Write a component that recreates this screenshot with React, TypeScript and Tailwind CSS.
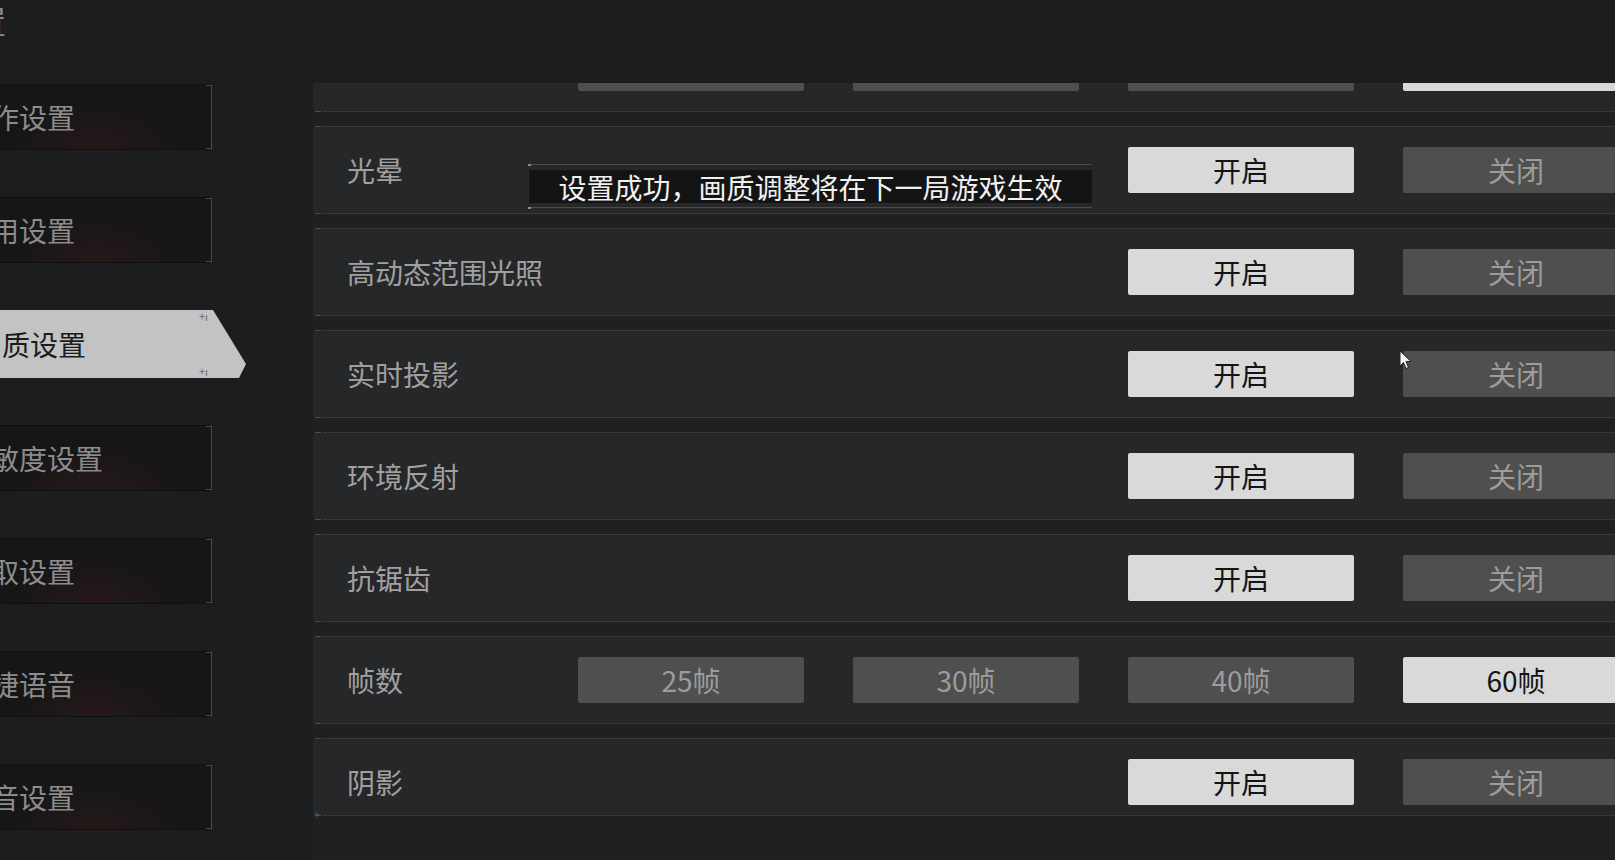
import React from "react";

type Row = {
  label: string;
  options: string[];
  active: number;
  startCol: number;
  last?: boolean;
  toast?: boolean;
};

const rows: Row[] = [
  { label: "画面", options: ["25帧", "30帧", "40帧", "60帧"], active: 3, startCol: 1 },
  { label: "光晕", options: ["开启", "关闭"], active: 0, startCol: 3, toast: true },
  { label: "高动态范围光照", options: ["开启", "关闭"], active: 0, startCol: 3 },
  { label: "实时投影", options: ["开启", "关闭"], active: 0, startCol: 3 },
  { label: "环境反射", options: ["开启", "关闭"], active: 0, startCol: 3 },
  { label: "抗锯齿", options: ["开启", "关闭"], active: 0, startCol: 3 },
  { label: "帧数", options: ["25帧", "30帧", "40帧", "60帧"], active: 3, startCol: 1 },
  { label: "阴影", options: ["开启", "关闭"], active: 0, startCol: 3, last: true },
];

const sideItems = [
  { text: "操作设置", selected: false },
  { text: "通用设置", selected: false },
  { text: "画质设置", selected: true },
  { text: "灵敏度设置", selected: false },
  { text: "拾取设置", selected: false },
  { text: "快捷语音", selected: false },
  { text: "声音设置", selected: false },
];

function SideItem({ text, selected }: { text: string; selected: boolean }) {
  if (selected) {
    return (
      <div className="relative h-[68px] w-[246px] shrink-0">
        <div className="flex h-full w-full items-center bg-[#c3c3c3] [clip-path:polygon(0_0,213px_0,246px_54px,239px_100%,0_100%)]">
          <span className="ml-[-26px] whitespace-nowrap text-[28px] leading-none text-[#1c1c1c]">{text}</span>
        </div>
        <span className="absolute left-[199px] top-[1px] text-[11px] leading-none text-[#6a6a6a]">+ı</span>
        <span className="absolute left-[199px] bottom-[1px] text-[11px] leading-none text-[#6a6a6a]">+ı</span>
      </div>
    );
  }
  return (
    <div className="relative flex h-[66px] w-[212px] shrink-0 items-center overflow-hidden border-y border-[#101011] border-r border-r-[#4a4a4c] bg-[#161617] bg-[radial-gradient(ellipse_at_45%_110%,rgba(95,30,30,0.24),transparent_55%)]">
      <span className="ml-[-37px] whitespace-nowrap text-[28px] leading-none text-[#8c8c8c]">{text}</span>
      <span className="absolute right-0 top-0 h-px w-[5px] bg-[#4a4a4c]" />
      <span className="absolute right-0 bottom-0 h-px w-[5px] bg-[#4a4a4c]" />
    </div>
  );
}

function Line({ plus }: { plus?: boolean }) {
  return (
    <div className="relative flex h-px w-full items-center">
      <div className="ml-[2px] h-px w-[6px] bg-[#4c4d4f]" />
      <div className="ml-[2px] h-px flex-1 bg-[#38393b]" />
      {plus ? (
        <span className="absolute left-[1px] top-[-6px] text-[11px] leading-none text-[#555]">+</span>
      ) : null}
    </div>
  );
}

function OptionButton({ text, active, col }: { text: string; active: boolean; col: number }) {
  const colClass = col === 1 ? "col-start-1" : col === 2 ? "col-start-2" : col === 3 ? "col-start-3" : "col-start-4";
  return (
    <div
      className={
        colClass +
        " flex h-[46px] w-[226px] items-center justify-center rounded-[2px] text-[28px] leading-none " +
        (active ? "bg-[#d9d9d9] text-[#141414]" : "bg-[#4f4f50] text-[#9c9c9c]")
      }
    >
      {text}
    </div>
  );
}

function SettingRow({ row }: { row: Row }) {
  return (
    <div className={"relative flex w-full shrink-0 flex-col " + (row.last ? "h-[78px]" : "h-[88px]")}>
      <Line />
      <div className={"flex flex-1 bg-[#262729] " + (row.last ? "items-start pt-[20px]" : "items-center")}>
        <div className="flex h-[46px] w-[265px] shrink-0 items-center pl-[34px] text-[28px] leading-none whitespace-nowrap text-[#a0a0a0]">{row.label}</div>
        <div className="grid grid-cols-[226px_226px_226px_226px] gap-x-[49px]">
          {row.options.map((o, i) => (
            <OptionButton key={o} text={o} active={i === row.active} col={row.startCol + i} />
          ))}
        </div>
      </div>
      <Line plus={row.last} />
      {row.toast ? (
        <div className="absolute left-[215px] top-[38px] flex w-[564px] flex-col">
          <div className="flex h-px items-center">
            <span className="h-[2px] w-[3px] bg-[#8a8a8a]" />
            <span className="h-px flex-1 bg-[#4a4b4d]" />
          </div>
          <div className="mt-[5px] flex h-[33px] items-center justify-center border-l border-[#2a2a2a] bg-[#141415]">
            <span className="whitespace-nowrap text-[28px] leading-none text-[#f0f0f0]">设置成功，画质调整将在下一局游戏生效</span>
          </div>
          <div className="mt-[4px] flex h-px items-center">
            <span className="h-[2px] w-[3px] bg-[#8a8a8a]" />
            <span className="h-px flex-1 bg-[#4a4b4d]" />
          </div>
        </div>
      ) : null}
    </div>
  );
}

export default function App() {
  return (
    <div className="relative flex h-[860px] w-[1615px] flex-col overflow-hidden bg-[#1c1d1f] font-['Noto_Sans_CJK_SC','Noto_Sans',sans-serif]">
      <div className="flex h-[83px] shrink-0 items-start overflow-hidden">
        <span className="ml-[-58px] mt-[4px] whitespace-nowrap text-[32px] leading-none text-[#8a8a8a]">设置</span>
      </div>
      <div className="flex flex-1 overflow-hidden">
        <div className="flex w-[313px] shrink-0 flex-col gap-[47px] pt-[1px]">
          {sideItems.map((s) => (
            <SideItem key={s.text} text={s.text} selected={s.selected} />
          ))}
        </div>
        <div className="flex flex-1 flex-col overflow-hidden bg-[#1f2022]">
          <div className="mt-[-59px] flex flex-col gap-[14px]">
            {rows.map((r, i) => (
              <SettingRow key={i} row={r} />
            ))}
          </div>
        </div>
      </div>
      <svg className="absolute left-[1399px] top-[350px]" width="14" height="20" viewBox="0 0 14 20">
        <path d="M1 1 L1 16 L4.5 12.5 L7 18.5 L9.5 17.5 L7 11.5 L12 11.5 Z" fill="#f4f4f4" stroke="#222" strokeWidth="1" />
      </svg>
    </div>
  );
}
